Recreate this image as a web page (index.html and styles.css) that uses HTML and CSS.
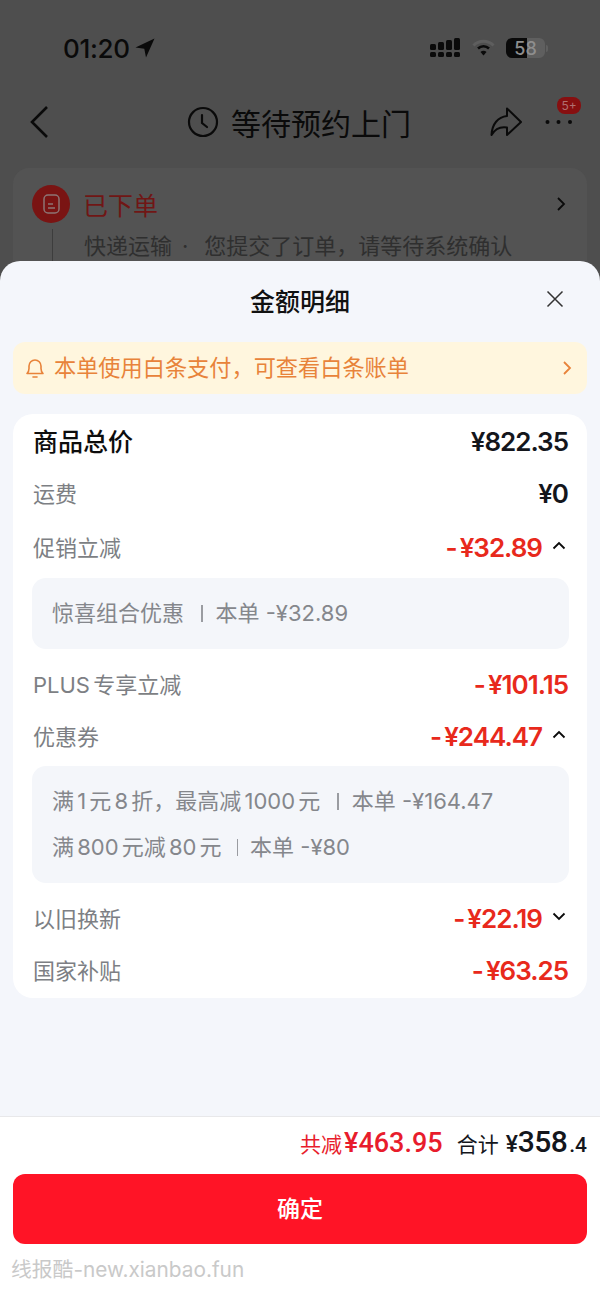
FILE: index.html
```html
<!DOCTYPE html>
<html lang="zh-CN">
<head>
  <meta charset="UTF-8">
  <title>金额明细</title>
  <meta name="viewport" content="width=device-width, initial-scale=1.0">
  <link rel="stylesheet" href="styles.css">
</head>
<body>
  <div class="page">
    <!-- behind the sheet -->
    <div class="behind">
      <div class="status">
        <div class="time">01:20
          <svg class="loc" width="20" height="20" viewBox="0 0 20 20"><path d="M19.500 .5 .5 9.500l8.800 1.200L11 19.500z" fill="#0a0a0a"/></svg>
        </div>
        <div class="status-right">
          <svg width="30" height="20" viewBox="0 0 30 20" fill="#0a0a0a">
            <rect x="0" y="6" width="6" height="6" rx="1.500"/><rect x="8" y="4" width="6" height="8" rx="1.500"/><rect x="16" y="2" width="6" height="10" rx="1.500"/><rect x="24" y="0" width="6" height="12" rx="1.500"/>
            <rect x="0" y="14" width="6" height="5" rx="1.500"/><rect x="8" y="14" width="6" height="5" rx="1.500"/><rect x="16" y="14" width="6" height="5" rx="1.500"/><rect x="24" y="14" width="6" height="5" rx="1.500"/>
          </svg>
          <svg class="wifi" width="23" height="18" viewBox="0 0 23 18" fill="none">
            <path d="M1.500 6.500a14 14 0 0 1 20 0" stroke="#5e5e5e" stroke-width="3"/>
            <path d="M6 9.500a8 8 0 0 1 11 0" stroke="#0a0a0a" stroke-width="2.600"/>
            <path d="M8.500 13a4 4 0 0 1 6 0l-3 3.500z" fill="#0a0a0a"/>
          </svg>
          <div class="battery"><span class="battery-num">58</span></div>
          <div class="battery-cap"></div>
        </div>
      </div>

      <div class="nav">
        <svg class="back" width="22" height="34" viewBox="0 0 22 34" fill="none"><path d="M18 2 3 17l15 15" stroke="#0a0a0a" stroke-width="2.600"/></svg>
        <div class="nav-title">
          <svg width="32" height="32" viewBox="0 0 32 32" fill="none" stroke="#0a0a0a" stroke-width="2.200"><circle cx="16" cy="16" r="14"/><path d="M15 9v8l5 4" stroke-linecap="round"/></svg>
          <span>等待预约上门</span>
        </div>
        <div class="nav-actions">
          <svg width="32" height="30" viewBox="0 0 32 30" fill="none"><path d="M17 1.500 31 15 17 28v-7.500C11 19.500 5 22 1.500 28 2 17 8 10 17 9z" stroke="#0a0a0a" stroke-width="2" stroke-linejoin="round"/></svg>
          <div class="more">
            <svg width="28" height="6" viewBox="0 0 28 6" fill="#0a0a0a"><circle cx="2.500" cy="3" r="2"/><circle cx="13.500" cy="3" r="2"/><circle cx="25" cy="3" r="2"/></svg>
            <span class="badge">5+</span>
          </div>
        </div>
      </div>

      <div class="order-card">
        <div class="order-head">
          <div class="order-icon">
            <svg width="17" height="20" viewBox="0 0 17 20" fill="none" stroke="#8d7474" stroke-width="1.500"><rect x="1" y="1" width="15" height="18" rx="4"/><path d="M5 10h5M5 14h7"/></svg>
          </div>
          <span class="order-title">已下单</span>
          <svg class="order-arrow" width="10" height="16" viewBox="0 0 10 16" fill="none"><path d="M2 2l6 6-6 6" stroke="#0a0a0a" stroke-width="1.800"/></svg>
        </div>
        <div class="order-desc">快递运输<i class="dot">·</i>您提交了订单，请等待系统确认</div>
      </div>
    </div>

    <!-- bottom sheet -->
    <div class="sheet">
      <div class="sheet-head">
        <span class="sheet-title">金额明细</span>
        <svg class="close" width="18" height="18" viewBox="0 0 18 18" fill="none"><path d="M1.500 1.500l15 15M16.500 1.500l-15 15" stroke="#333" stroke-width="1.500"/></svg>
      </div>

      <div class="notice">
        <svg width="20" height="22" viewBox="0 0 20 22" fill="none" stroke="#e8833a" stroke-width="1.600"><path d="M2 16.500c1.500-1.500 2-2.500 2-5V9a6 6 0 0 1 12 0v2.500c0 2.500.5 3.500 2 5z" stroke-linejoin="round"/><path d="M8 20h4" stroke-linecap="round"/></svg>
        <span class="notice-text">本单使用白条支付，可查看白条账单</span>
        <svg class="notice-arrow" width="10" height="16" viewBox="0 0 10 16" fill="none"><path d="M2 2l6 6-6 6" stroke="#e8833a" stroke-width="1.800"/></svg>
      </div>

      <div class="detail">
        <div class="row">
          <span class="row-name strong">商品总价</span>
          <span class="amount">¥822.35</span>
        </div>
        <div class="row row-freight">
          <span class="row-name">运费</span>
          <span class="amount">¥0</span>
        </div>
        <div class="row">
          <span class="row-name">促销立减</span>
          <span class="amount-wrap">
            <span class="amount red"><i class="minus">-</i>¥32.89</span>
            <svg class="caret" width="14" height="9" viewBox="0 0 14 9" fill="none"><path d="M1.500 7.500 7 2l5.500 5.500" stroke="#0a0a0a" stroke-width="1.800"/></svg>
          </span>
        </div>
        <div class="sub sub-one">
          <div class="sub-line">惊喜组合优惠<i class="sep"></i>本单 -¥32.89</div>
        </div>
        <div class="row row-after">
          <span class="row-name tight">PLUS 专享立减</span>
          <span class="amount red"><i class="minus">-</i>¥101.15</span>
        </div>
        <div class="row">
          <span class="row-name">优惠券</span>
          <span class="amount-wrap">
            <span class="amount red"><i class="minus">-</i>¥244.47</span>
            <svg class="caret" width="14" height="9" viewBox="0 0 14 9" fill="none"><path d="M1.500 7.500 7 2l5.500 5.500" stroke="#0a0a0a" stroke-width="1.800"/></svg>
          </span>
        </div>
        <div class="sub">
          <div class="sub-line"><span class="tight">满 1 元 8 折，最高减 1000 元</span><i class="sep"></i>本单 -¥164.47</div>
          <div class="sub-line"><span class="tight">满 800 元减 80 元</span><i class="sep sep-short"></i>本单 -¥80</div>
        </div>
        <div class="row row-after">
          <span class="row-name">以旧换新</span>
          <span class="amount-wrap">
            <span class="amount red"><i class="minus">-</i>¥22.19</span>
            <svg class="caret" width="14" height="9" viewBox="0 0 14 9" fill="none"><path d="M1.500 1.500 7 7l5.500-5.500" stroke="#0a0a0a" stroke-width="1.800"/></svg>
          </span>
        </div>
        <div class="row">
          <span class="row-name">国家补贴</span>
          <span class="amount red"><i class="minus">-</i>¥63.25</span>
        </div>
      </div>

      <div class="footer">
        <div class="sum">
          <span class="sum-cut">共减<b>¥463.95</b></span>
          <span class="sum-total">合计<b class="yen">¥</b><b class="big">358</b><b class="small">.4</b></span>
        </div>
        <div class="confirm">确定</div>
        <div class="watermark">线报酷-new.xianbao.fun</div>
      </div>
    </div>
  </div>
</body>
</html>
```

FILE: styles.css
```css
html, body {
  margin: 0;
  padding: 0;
  width: 600px;
  height: 1304px;
  overflow: hidden;
  font-family: "Inter", "Noto Sans CJK SC", sans-serif;
}

i { font-style: normal; }

.page {
  display: flex;
  flex-direction: column;
  height: 1304px;
  background: #4e4e4e;
}

/* dimmed page behind the sheet */
.behind {
  height: 261px;
  overflow: hidden;
  flex-shrink: 0;
  color: #0a0a0a;
}

.status {
  display: flex;
  justify-content: space-between;
  align-items: center;
  padding: 34px 52px 0 63px;
  height: 28px;
}

.time {
  display: flex;
  align-items: center;
  gap: 5px;
  font-size: 26px;
  font-weight: 500;
  letter-spacing: -0.3px;
}

.status-right {
  display: flex;
  align-items: center;
}

.wifi { margin-left: 12px; }

.battery {
  width: 39px;
  height: 20px;
  margin-left: 11px;
  border-radius: 6px;
  background: linear-gradient(90deg, #0a0a0a 0 54%, #5f5f5f 54%);
  display: flex;
  align-items: center;
  justify-content: center;
}

.battery-num {
  color: #8e8e8e;
  font-size: 18px;
  font-weight: 500;
}

.battery-cap {
  width: 2px;
  height: 7px;
  margin-left: 1px;
  border-radius: 0 2px 2px 0;
  background: #5f5f5f;
}

.nav {
  display: flex;
  align-items: center;
  justify-content: space-between;
  height: 44px;
  margin-top: 38px;
  padding: 0 27px 0 29px;
  position: relative;
}

.nav-title {
  position: absolute;
  left: 187px;
  display: flex;
  align-items: center;
  gap: 12px;
  font-size: 30px;
}

.nav-actions {
  display: flex;
  align-items: center;
  gap: 23px;
}

.more {
  position: relative;
  display: flex;
  align-items: center;
  width: 28px;
  height: 28px;
}

.badge {
  position: absolute;
  top: -11px;
  left: 12px;
  width: 24px;
  height: 17px;
  border-radius: 8px;
  background: #870f10;
  color: #b07070;
  font-size: 12px;
  line-height: 17px;
  text-align: center;
}

.order-card {
  margin: 24px 13px 0;
  height: 120px;
  padding: 17px 19px;
  background: #535353;
  border-radius: 16px 16px 0 0;
}

.order-head {
  display: flex;
  align-items: center;
  height: 38px;
}

.order-icon {
  width: 38px;
  height: 38px;
  border-radius: 50%;
  background: #7a1413;
  display: flex;
  align-items: center;
  justify-content: center;
}

.order-title {
  margin-left: 13px;
  color: #701615;
  font-size: 25px;
}

.order-arrow { margin-left: auto; margin-right: 2px; }

.order-desc {
  margin: 6px 0 0 20px;
  padding: 2px 0 0 31px;
  border-left: 1px solid #3d3d3d;
  color: #2f2f2f;
  font-size: 22px;
  line-height: 30px;
  white-space: nowrap;
}

.dot { margin: 0 16px 0 10px; }

/* bottom sheet */
.sheet {
  flex: 1;
  display: flex;
  flex-direction: column;
  background: #f4f6fb;
  border-radius: 20px 20px 0 0;
}

.sheet-head {
  position: relative;
  height: 81px;
  display: flex;
  justify-content: center;
  align-items: flex-start;
}

.sheet-title {
  margin-top: 24px;
  font-size: 25px;
  line-height: 34px;
  font-weight: 500;
  color: #111;
}

.close {
  position: absolute;
  right: 36px;
  top: 29px;
}

.notice {
  display: flex;
  align-items: center;
  height: 52px;
  margin: 0 13px;
  padding: 0 15px 0 12px;
  border-radius: 12px;
  background: #fff6de;
  color: #e8833a;
}

.notice-text {
  margin-left: 9px;
  font-size: 22.200px;
  line-height: 50px;
}

.notice-arrow { margin-left: auto; }

.detail {
  margin: 20px 13px 0;
  height: 584px;
  box-sizing: border-box;
  padding: 0 18px 0 19px;
  background: #fff;
  border-radius: 20px;
}

.row {
  display: flex;
  justify-content: space-between;
  align-items: center;
  height: 52px;
  padding: 0 1px;
}

.row-freight { margin-bottom: 2px; }

.row-name {
  color: #7d7f84;
  font-size: 22px;
}

.row-name.strong {
  color: #0d0d0d;
  font-size: 25px;
  font-weight: 500;
}

.tight { word-spacing: -3px; }

.amount {
  margin-top: 2px;
  color: #14161c;
  font-size: 26px;
  font-weight: 600;
  letter-spacing: -1px;
}

.amount.red { color: #e8291c; }

.minus { margin-right: 3px; }

.amount-wrap {
  display: flex;
  align-items: center;
  gap: 10px;
}

.caret { margin-right: 2px; margin-top: -2px; }

.sub {
  margin-top: 5px;
  padding: 12px 20px 13px;
  background: #f4f6fa;
  border-radius: 14px;
}

.sub-one { margin-top: 6px; }

.sub-line {
  display: flex;
  align-items: center;
  color: #85878c;
  font-size: 22px;
  line-height: 46px;
  white-space: pre;
}

.sep {
  width: 1.500px;
  height: 17px;
  margin: 0 13px 0 17px;
  background: #9a9ca1;
}

.sep-short { margin-left: 15px; margin-right: 12px; }

.row-after { margin-top: 8px; }

.footer {
  margin-top: auto;
  height: 188px;
  box-sizing: border-box;
  padding: 0 13px;
  background: #fff;
  border-top: 1px solid #e8e8ea;
}

.sum {
  display: flex;
  justify-content: flex-end;
  align-items: baseline;
  gap: 14px;
  height: 57px;
  line-height: 50px;
}

.sum-cut {
  color: #e81c2c;
  font-size: 21px;
}

.sum-cut b {
  margin-left: 2px;
  font-family: "Roboto", "Noto Sans CJK SC", sans-serif;
  font-size: 27px;
  font-weight: 500;
}

.sum-total {
  color: #14161c;
  font-size: 21px;
}

.sum-total b {
  font-family: "Roboto", "Noto Sans CJK SC", sans-serif;
  font-weight: 500;
}

.yen { margin-left: 7px; font-size: 23px; }
.big { font-size: 30px; letter-spacing: -0.6px; }
.small { padding-left: 2px; font-size: 21px; }

.confirm {
  height: 70px;
  line-height: 70px;
  text-align: center;
  border-radius: 12px;
  background: #ff1426;
  color: #fff;
  font-size: 23px;
  font-weight: 500;
}

.watermark {
  margin-top: 12px;
  margin-left: -2px;
  color: #c9c9c9;
  font-size: 20.800px;
  line-height: 28px;
}
```
